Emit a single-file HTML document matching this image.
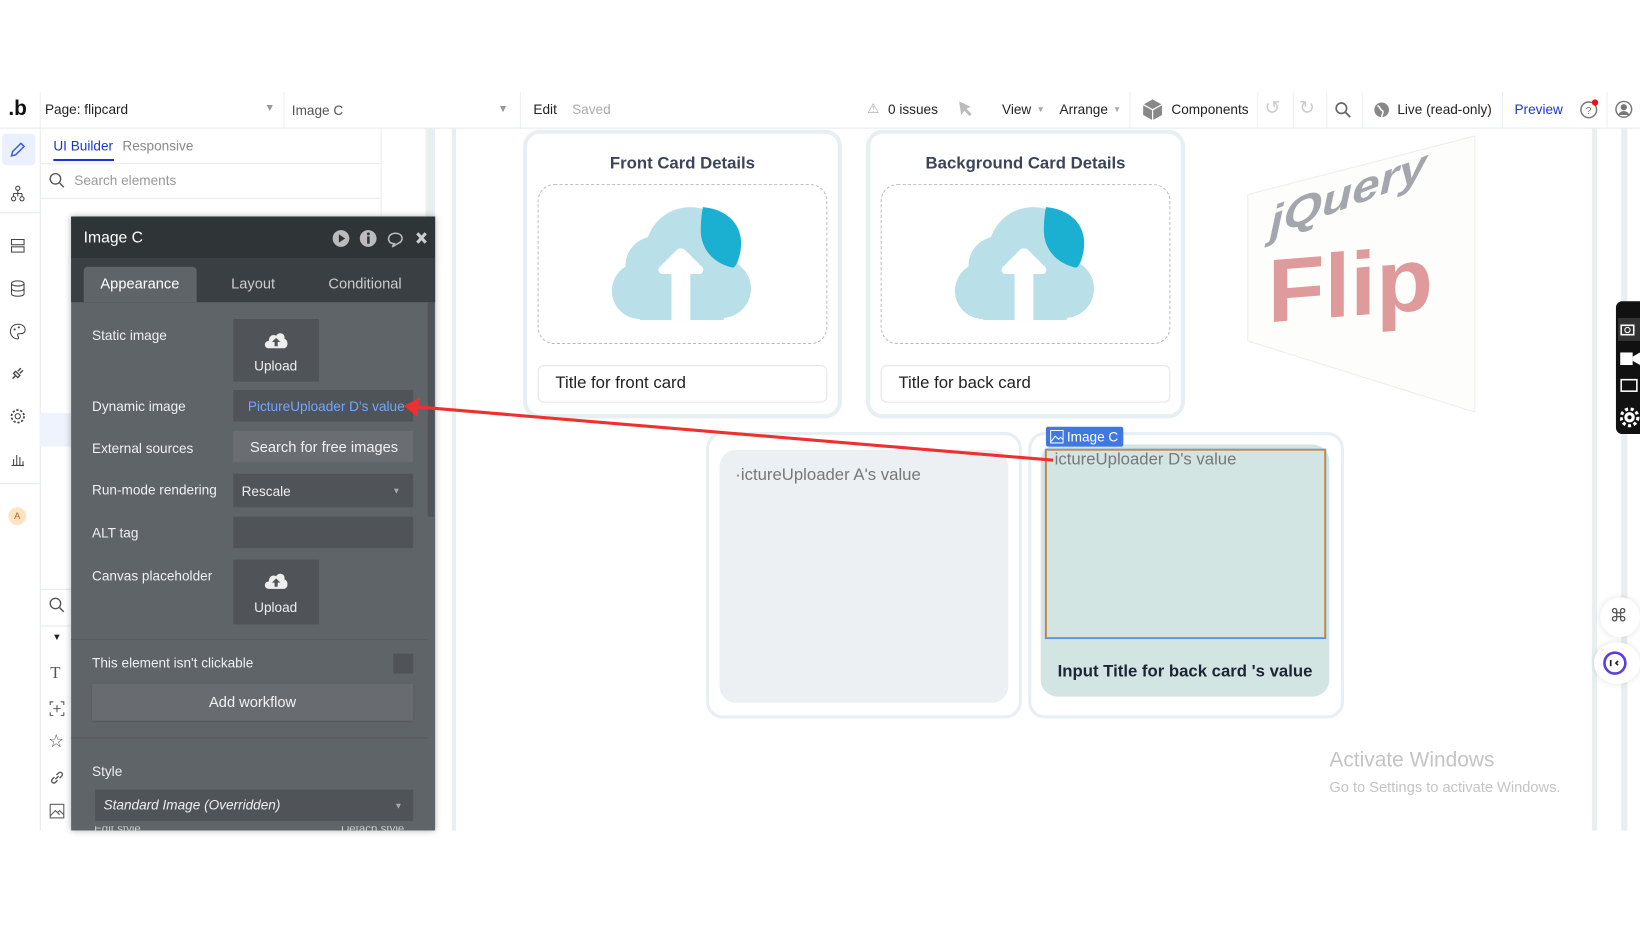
<!DOCTYPE html>
<html><head><meta charset="utf-8"><style>
html,body{margin:0;padding:0;width:1640px;height:924px;overflow:hidden;background:#fff;font-family:"Liberation Sans",sans-serif}
#w{position:absolute;left:0;top:0;width:1568px;height:884px;transform:scale(1.04592);transform-origin:0 0}
.a{position:absolute}
.t{position:absolute;white-space:nowrap}
.sep{position:absolute;top:88px;width:1px;height:34px;background:#eceff1}
.lbl{position:absolute;left:88px;color:#eef0f1;font-size:13px}
.box{position:absolute;background:#505458}
</style></head><body><div id="w">
<!-- top bar -->
<div class="a" style="left:0;top:88px;width:1568px;height:34px;background:#fff;border-bottom:1px solid #e6e9eb"></div>
<div class="t" style="left:8px;top:93px;font-size:20px;font-weight:bold;color:#111">.b</div>
<div class="sep" style="left:38px"></div>
<div class="t" style="left:43px;top:97px;font-size:13px;color:#222">Page: flipcard</div>
<div class="t" style="left:253px;top:98px;font-size:10px;color:#999">▼</div>
<div class="sep" style="left:271px"></div>
<div class="t" style="left:279px;top:98px;font-size:13px;color:#555">Image C</div>
<div class="t" style="left:476px;top:99px;font-size:10px;color:#999">▼</div>
<div class="sep" style="left:497px"></div>
<div class="t" style="left:510px;top:97px;font-size:13px;color:#222">Edit</div>
<div class="t" style="left:547px;top:97px;font-size:13px;color:#aaa">Saved</div>
<div class="t" style="left:829px;top:96px;font-size:13px;color:#aaa">⚠</div>
<div class="t" style="left:849px;top:97px;font-size:13px;color:#222">0 issues</div>
<svg class="a" style="left:915px;top:96px" width="16" height="16"><path d="M2 1 L4 14 L7 10 L12 15 L14 13 L9 8 L13 6 Z" fill="#bbb"/></svg>
<div class="t" style="left:958px;top:97px;font-size:13px;color:#222">View</div>
<div class="t" style="left:991px;top:100px;font-size:8px;color:#aaa">▼</div>
<div class="t" style="left:1013px;top:97px;font-size:13px;color:#222">Arrange</div>
<div class="t" style="left:1064px;top:100px;font-size:8px;color:#aaa">▼</div>
<div class="sep" style="left:1080px"></div>
<svg class="a" style="left:1092px;top:94px" width="20" height="22"><path d="M10 1 L19 6 L19 16 L10 21 L1 16 L1 6 Z" fill="#888"/><path d="M1 6 L10 11 L19 6 M10 11 L10 21" stroke="#fff" stroke-width="1.2" fill="none"/></svg>
<div class="t" style="left:1120px;top:97px;font-size:13px;color:#222">Components</div>
<div class="sep" style="left:1202px"></div>
<div class="t" style="left:1209px;top:93px;font-size:18px;color:#ccc">↺</div>
<div class="sep" style="left:1236px"></div>
<div class="t" style="left:1242px;top:93px;font-size:18px;color:#ccc">↻</div>
<div class="sep" style="left:1268px"></div>
<svg class="a" style="left:1276px;top:97px" width="16" height="16"><circle cx="6.5" cy="6.5" r="5" stroke="#666" stroke-width="1.6" fill="none"/><path d="M10 10 L15 15" stroke="#666" stroke-width="1.8"/></svg>
<div class="sep" style="left:1302px"></div>
<svg class="a" style="left:1313px;top:97px" width="16" height="16"><circle cx="8" cy="8" r="7" fill="#888"/><path d="M4 4 C7 5 6 8 9 9 C10 11 8 13 8 15" stroke="#fff" stroke-width="1.4" fill="none"/></svg>
<div class="t" style="left:1336px;top:97px;font-size:13px;color:#222">Live (read-only)</div>
<div class="sep" style="left:1436px"></div>
<div class="t" style="left:1448px;top:97px;font-size:13px;color:#1d35d0">Preview</div>
<svg class="a" style="left:1510px;top:94px" width="20" height="20"><circle cx="9" cy="11" r="7.5" stroke="#777" stroke-width="1.4" fill="none"/><text x="6" y="15" font-size="10" fill="#777" font-family="Liberation Sans">?</text><circle cx="15" cy="4" r="3" fill="#e11"/></svg>
<div class="sep" style="left:1536px"></div>
<svg class="a" style="left:1544px;top:96px" width="17" height="17"><circle cx="8.5" cy="8.5" r="7.5" stroke="#777" stroke-width="1.4" fill="#fff"/><circle cx="8.5" cy="6.5" r="3" fill="#777"/><path d="M3 14 C5 9 12 9 14 14" fill="#777"/></svg>

<!-- left icon column -->
<div class="a" style="left:38px;top:123px;width:1px;height:671px;background:#e6e9eb"></div>
<div class="a" style="left:2px;top:128px;width:32px;height:30px;background:#eaf0fd;border-radius:4px"></div>
<svg class="a" style="left:9px;top:135px" width="16" height="16"><path d="M11 2 L14 5 L6 13 L2 14 L3 10 Z" stroke="#3b5bdb" stroke-width="1.4" fill="none"/></svg>
<svg class="a" style="left:10px;top:177px" width="14" height="16"><circle cx="7" cy="3" r="2" stroke="#444" fill="none"/><path d="M7 5 V8 M3 8 H11 M3 8 V11 M11 8 V11 M7 8 V11" stroke="#444" fill="none"/><circle cx="3" cy="13" r="2" stroke="#444" fill="none"/><circle cx="11" cy="13" r="2" stroke="#444" fill="none"/></svg>
<div class="a" style="left:0;top:203px;width:38px;height:1px;background:#e6e9eb"></div>
<svg class="a" style="left:10px;top:228px" width="14" height="14"><rect x="1" y="1" width="12" height="5" stroke="#444" fill="none"/><rect x="1" y="8" width="12" height="5" stroke="#444" fill="none"/></svg>
<svg class="a" style="left:10px;top:268px" width="14" height="16"><ellipse cx="7" cy="3" rx="6" ry="2.5" stroke="#444" fill="none"/><path d="M1 3 V13 C1 16 13 16 13 13 V3 M1 8 C1 11 13 11 13 8" stroke="#444" fill="none"/></svg>
<svg class="a" style="left:9px;top:309px" width="16" height="16"><path d="M8 1 C3 1 1 5 1 8 C1 12 4 15 8 15 C9 15 9 13 8 12 C7 10 9 10 11 10 C14 10 15 8 15 6 C15 3 12 1 8 1Z" stroke="#444" fill="none"/><circle cx="5" cy="6" r="1" fill="#444"/><circle cx="9" cy="4" r="1" fill="#444"/></svg>
<svg class="a" style="left:9px;top:349px" width="16" height="16"><path d="M3 13 L6 10 M6 6 L10 10 L8 12 L4 8 Z M8 6 L11 3 M10 8 L13 5" stroke="#444" stroke-width="1.3" fill="none"/></svg>
<svg class="a" style="left:9px;top:390px" width="16" height="16"><circle cx="8" cy="8" r="2.5" stroke="#444" fill="none"/><circle cx="8" cy="8" r="6" stroke="#444" stroke-width="1.6" stroke-dasharray="2.2 1.6" fill="none"/></svg>
<svg class="a" style="left:10px;top:432px" width="14" height="14"><path d="M1 13 H13 M3 13 V7 M6 13 V3 M9 13 V5 M12 13 V9" stroke="#444" fill="none"/></svg>
<div class="a" style="left:0;top:462px;width:38px;height:1px;background:#e6e9eb"></div>
<div class="a" style="left:8px;top:485px;width:17px;height:17px;border-radius:50%;background:#fde2c4;color:#b36a14;font-size:9px;text-align:center;line-height:17px">A</div>

<!-- left panel -->
<div class="t" style="left:51px;top:132px;font-size:13px;color:#1d35d0">UI Builder</div>
<div class="a" style="left:51px;top:152px;width:58px;height:2px;background:#1d35d0"></div>
<div class="t" style="left:117px;top:132px;font-size:13px;color:#888">Responsive</div>
<div class="a" style="left:39px;top:156px;width:326px;height:1px;background:#e6e9eb"></div>
<svg class="a" style="left:47px;top:165px" width="15" height="15"><circle cx="6" cy="6" r="5" stroke="#555" stroke-width="1.3" fill="none"/><path d="M10 10 L14 14" stroke="#555" stroke-width="1.4"/></svg>
<div class="t" style="left:71px;top:165px;font-size:13px;color:#999">Search elements</div>
<div class="a" style="left:39px;top:189px;width:326px;height:1px;background:#e6e9eb"></div>
<div class="a" style="left:364px;top:123px;width:1px;height:86px;background:#eceff1"></div>
<div class="a" style="left:38px;top:395px;width:30px;height:32px;background:#eef3fd"></div>
<div class="a" style="left:38px;top:563px;width:30px;height:1px;background:#e6e9eb"></div>
<div class="a" style="left:38px;top:598px;width:30px;height:1px;background:#e6e9eb"></div>
<svg class="a" style="left:47px;top:571px" width="15" height="15"><circle cx="6" cy="6" r="5" stroke="#555" stroke-width="1.3" fill="none"/><path d="M10 10 L14 14" stroke="#555" stroke-width="1.4"/></svg>
<div class="t" style="left:50px;top:604px;font-size:9px;color:#222">▼</div>
<div class="t" style="left:48px;top:635px;font-family:'Liberation Serif',serif;font-size:16px;color:#555">T</div>
<svg class="a" style="left:47px;top:670px" width="15" height="15"><path d="M1 4 V1 H4 M11 1 H14 V4 M14 11 V14 H11 M4 14 H1 V11 M7.5 4 V11 M4 7.5 H11" stroke="#555" fill="none"/></svg>
<div class="t" style="left:46px;top:699px;font-size:17px;color:#555">☆</div>
<svg class="a" style="left:47px;top:736px" width="15" height="15"><path d="M6 9 L9 6 M5 7 L3 9 C1 11 4 14 6 12 L8 10 M7 5 L9 3 C11 1 14 4 12 6 L10 8" stroke="#555" stroke-width="1.3" fill="none"/></svg>
<svg class="a" style="left:47px;top:768px" width="15" height="15"><rect x="1" y="1" width="13" height="13" stroke="#555" fill="none"/><path d="M1 12 L6 7 L10 11 M8 9 L10 7 L14 11" stroke="#555" fill="none"/></svg>

<!-- canvas bars -->
<div class="a" style="left:407px;top:123px;width:9px;height:671px;background:#e9eef1"></div>
<div class="a" style="left:432px;top:123px;width:4px;height:671px;background:#e9eef1"></div>
<div class="a" style="left:1522px;top:123px;width:5px;height:671px;background:#e9eef1"></div>
<div class="a" style="left:1550px;top:123px;width:6px;height:671px;background:#e9eef1"></div>

<!-- property panel -->
<div class="a" style="left:68px;top:207px;width:348px;height:587px;background:#5f6468;box-shadow:0 0 6px rgba(0,0,0,.3)"></div>
<div class="a" style="left:68px;top:207px;width:348px;height:40px;background:#2f3437"></div>
<div class="t" style="left:80px;top:219px;font-size:15px;color:#fff">Image C</div>
<svg class="a" style="left:318px;top:219px" width="95" height="18"><circle cx="8" cy="9" r="8" fill="#bbb"/><path d="M6 5 L12 9 L6 13Z" fill="#2f3437"/><circle cx="34" cy="9" r="8" fill="#bbb"/><rect x="33" y="7" width="2.4" height="7" fill="#2f3437"/><circle cx="34.2" cy="4.6" r="1.4" fill="#2f3437"/><path d="M60 4 C52 4 51 14 59 14 L57 17 L63 13.5 C68 12 68 4 60 4Z" stroke="#bbb" stroke-width="1.5" fill="none"/><path d="M81 4 L89 13 M89 4 L81 13" stroke="#ccc" stroke-width="3"/></svg>
<div class="a" style="left:68px;top:247px;width:348px;height:42px;background:#3a3f43"></div>
<div class="a" style="left:80px;top:255px;width:108px;height:34px;background:#5f6468;border-radius:4px 4px 0 0"></div>
<div class="t" style="left:96px;top:263px;font-size:14px;color:#fff">Appearance</div>
<div class="t" style="left:221px;top:263px;font-size:14px;color:#ccc">Layout</div>
<div class="t" style="left:314px;top:263px;font-size:14px;color:#ccc">Conditional</div>
<div class="a" style="left:409px;top:289px;width:6px;height:205px;background:#505458"></div>

<div class="lbl" style="top:313px">Static image</div>
<div class="box" style="left:223px;top:305px;width:82px;height:60px"></div>
<svg class="a" style="left:252px;top:316px" width="24" height="18"><path d="M5 17 C0 17 0 10 5 10 C5 5 9 3 12 5 C14 1 21 2 20 8 C24 9 24 17 19 17Z" fill="#eee"/><path d="M12 7 L8 11 H10.5 V15 H13.5 V11 H16Z" fill="#505458"/></svg>
<div class="t" style="left:243px;top:342px;font-size:13px;color:#eee">Upload</div>
<div class="lbl" style="top:381px">Dynamic image</div>
<div class="box" style="left:223px;top:373px;width:172px;height:30px"></div>
<div class="t" style="left:237px;top:381px;font-size:13px;color:#6ea8fe">PictureUploader D's value</div>
<div class="lbl" style="top:421px">External sources</div>
<div class="box" style="left:223px;top:412px;width:172px;height:30px;background:#6a6e72"></div>
<div class="t" style="left:239px;top:419px;font-size:14px;color:#f0f0f0">Search for free images</div>
<div class="lbl" style="top:461px">Run-mode rendering</div>
<div class="box" style="left:223px;top:453px;width:172px;height:32px"></div>
<div class="t" style="left:231px;top:462px;font-size:13px;color:#eee">Rescale</div>
<div class="t" style="left:375px;top:465px;font-size:8px;color:#aaa">▼</div>
<div class="lbl" style="top:502px">ALT tag</div>
<div class="box" style="left:223px;top:494px;width:172px;height:30px"></div>
<div class="lbl" style="top:543px">Canvas placeholder</div>
<div class="box" style="left:223px;top:535px;width:82px;height:62px"></div>
<svg class="a" style="left:252px;top:546px" width="24" height="18"><path d="M5 17 C0 17 0 10 5 10 C5 5 9 3 12 5 C14 1 21 2 20 8 C24 9 24 17 19 17Z" fill="#eee"/><path d="M12 7 L8 11 H10.5 V15 H13.5 V11 H16Z" fill="#505458"/></svg>
<div class="t" style="left:243px;top:573px;font-size:13px;color:#eee">Upload</div>
<div class="a" style="left:68px;top:611px;width:341px;height:1px;background:#575b5f"></div>
<div class="lbl" style="top:626px">This element isn't clickable</div>
<div class="box" style="left:376px;top:625px;width:19px;height:19px"></div>
<div class="a" style="left:88px;top:654px;width:307px;height:35px;background:#686c70;box-shadow:0 1px 2px rgba(0,0,0,.2)"></div>
<div class="t" style="left:88px;top:663px;width:307px;text-align:center;font-size:14px;color:#f2f2f2">Add workflow</div>
<div class="a" style="left:68px;top:705px;width:341px;height:1px;background:#575b5f"></div>
<div class="lbl" style="top:730px">Style</div>
<div class="box" style="left:91px;top:755px;width:304px;height:30px"></div>
<div class="t" style="left:99px;top:762px;font-size:13px;color:#eee;font-style:italic">Standard Image (Overridden)</div>
<div class="t" style="left:377px;top:766px;font-size:8px;color:#aaa">▼</div>
<div class="a" style="left:68px;top:790px;width:348px;height:4px;overflow:hidden"><div class="t" style="left:22px;top:-3px;font-size:11px;color:#ccc">Edit style</div><div class="t" style="left:258px;top:-3px;font-size:11px;color:#ccc">Detach style</div></div>

<!-- cloud svg def -->
<svg width="0" height="0" style="position:absolute"><defs><g id="cl"><circle cx="76" cy="45" r="43" fill="#b9e0e8"/><circle cx="42" cy="58" r="28" fill="#b9e0e8"/><circle cx="28" cy="82" r="27" fill="#b9e0e8"/><circle cx="106" cy="80" r="28" fill="#b9e0e8"/><rect x="28" y="60" width="80" height="50" fill="#b9e0e8"/><path d="M88 2 C112 4 128 20 124 44 C122 54 120 58 117 60 C98 56 86 42 86 24 C86 14 87 8 88 2Z" fill="#1bafd1"/><path d="M58 110 V66 H50 C46 66 44 62 47 59 L63 43 C65 41 69 41 71 43 L87 59 C90 62 88 66 84 66 H76 V110 Z" fill="#fff"/></g></defs></svg>

<!-- Front card -->
<div class="a" style="left:500px;top:124px;width:297px;height:268px;border:4px solid #e8eff2;border-radius:16px"></div>
<div class="t" style="left:500px;top:148px;width:305px;text-align:center;font-size:16px;font-weight:bold;color:#3a4558">Front Card Details</div>
<div class="a" style="left:514px;top:176px;width:275px;height:151px;border:1px dashed #bbb;border-radius:16px"></div>
<svg class="a" style="left:584px;top:196px" width="136" height="112" viewBox="0 0 136 112"><use href="#cl"/></svg>
<div class="a" style="left:514px;top:349px;width:275px;height:34px;border:1px solid #e3e6e8;border-radius:6px"></div>
<div class="t" style="left:531px;top:358px;font-size:16px;color:#222">Title for front card</div>

<!-- Back card -->
<div class="a" style="left:828px;top:124px;width:297px;height:268px;border:4px solid #e8eff2;border-radius:16px"></div>
<div class="t" style="left:828px;top:148px;width:305px;text-align:center;font-size:16px;font-weight:bold;color:#3a4558">Background Card Details</div>
<div class="a" style="left:842px;top:176px;width:275px;height:151px;border:1px dashed #bbb;border-radius:16px"></div>
<svg class="a" style="left:912px;top:196px" width="136" height="112" viewBox="0 0 136 112"><use href="#cl"/></svg>
<div class="a" style="left:842px;top:349px;width:275px;height:34px;border:1px solid #e3e6e8;border-radius:6px"></div>
<div class="t" style="left:859px;top:358px;font-size:16px;color:#222">Title for back card</div>

<!-- jQuery flip -->
<svg class="a" style="left:1190px;top:128px" width="225" height="268"><polygon points="3,58 220,2 220,266 3,198" fill="#fdfdfb" stroke="#eeeeea"/>
<g transform="matrix(1,-0.38,0,1,0,0)"><text x="24" y="108" font-family="Liberation Sans" font-weight="bold" font-style="italic" font-size="40" fill="#a3a6ac" textLength="150" lengthAdjust="spacingAndGlyphs">jQuery</text></g>
<g transform="matrix(1,-0.08,0,1,0,0)"><text x="22" y="182" font-family="Liberation Sans" font-weight="bold" font-size="86" fill="#df9a9b" textLength="158" lengthAdjust="spacingAndGlyphs">Flip</text></g></svg>

<!-- bottom cards -->
<div class="a" style="left:675px;top:413px;width:296px;height:268px;border:3px solid #e8eff2;border-radius:16px"></div>
<div class="a" style="left:688px;top:430px;width:276px;height:242px;background:#ecf0f2;border-radius:16px"></div>
<div class="t" style="left:703px;top:446px;font-size:16px;color:#777">·ictureUploader A's value</div>
<div class="a" style="left:983px;top:413px;width:296px;height:268px;border:3px solid #e8eff2;border-radius:16px"></div>
<div class="a" style="left:995px;top:425px;width:276px;height:241px;background:#d3e5e2;border-radius:16px"></div>
<div class="a" style="left:1000px;top:430px;width:265px;height:178px;border:1.5px solid #c9914a;outline:1px solid #5b8fd8"></div>
<div class="t" style="left:1003px;top:431px;font-size:16px;color:#777">·ictureUploader D's value</div>
<div class="a" style="left:1000px;top:408px;width:74px;height:19px;background:#3e78e0;border-radius:2px"></div>
<svg class="a" style="left:1004px;top:411px" width="13" height="13"><rect x="0.5" y="0.5" width="12" height="12" stroke="#fff" fill="none"/><path d="M1 11 L5 6 L8 9 L10 7 L12 9" stroke="#fff" fill="none"/></svg>
<div class="t" style="left:1020px;top:410px;font-size:13px;color:#fff">Image C</div>
<div class="t" style="left:995px;top:634px;width:276px;text-align:center;font-size:16px;font-weight:bold;color:#1d2433">Input Title for back card 's value</div>

<!-- red arrow -->
<svg class="a" style="left:0;top:0" width="1568" height="884" pointer-events="none"><path d="M1007 440 L398 389" stroke="#f03030" stroke-width="3"/><path d="M386 388 L402 380 L399 390 L400 399 Z" fill="#f03030"/></svg>

<!-- right side widgets -->
<div class="a" style="left:1545px;top:288px;width:23px;height:127px;background:#111;border-radius:6px 0 0 6px"></div>
<div class="a" style="left:1547px;top:304px;width:21px;height:22px;background:#333"></div>
<svg class="a" style="left:1549px;top:309px" width="19" height="100"><rect x="1" y="2" width="12" height="9" stroke="#fff" stroke-width="1.5" fill="none"/><circle cx="7" cy="6.5" r="2.5" stroke="#fff" fill="none"/><rect x="0" y="28" width="12" height="12" fill="#fff"/><path d="M12 32 L19 28 V40 L12 36Z" fill="#fff"/><rect x="1" y="54" width="15" height="11" stroke="#fff" stroke-width="1.5" fill="none"/><circle cx="9" cy="90" r="5" fill="#fff"/><circle cx="9" cy="90" r="8" stroke="#fff" stroke-width="3" stroke-dasharray="3 2.5" fill="none"/><circle cx="9" cy="90" r="2" fill="#111"/></svg>
<div class="a" style="left:1530px;top:571px;width:38px;height:38px;border-radius:50%;background:#fff;box-shadow:0 0 6px rgba(0,0,0,.12)"></div>
<div class="t" style="left:1539px;top:579px;font-size:17px;color:#555">⌘</div>
<div class="a" style="left:1524px;top:614px;width:44px;height:40px;border-radius:50%;background:#fff;box-shadow:0 0 6px rgba(0,0,0,.12)"></div>
<svg class="a" style="left:1532px;top:622px" width="26" height="24"><circle cx="12" cy="12" r="10" stroke="#5b3de0" stroke-width="2.5" fill="#fff"/><path d="M8 9 V15 M15 10 L13 12 L15 14" stroke="#222" stroke-width="1.6" fill="none"/></svg>

<div class="t" style="left:1271px;top:716px;font-size:20px;color:#c4c4c4">Activate Windows</div>
<div class="t" style="left:1271px;top:744px;font-size:14px;color:#c4c4c4">Go to Settings to activate Windows.</div>
</div></body></html>
